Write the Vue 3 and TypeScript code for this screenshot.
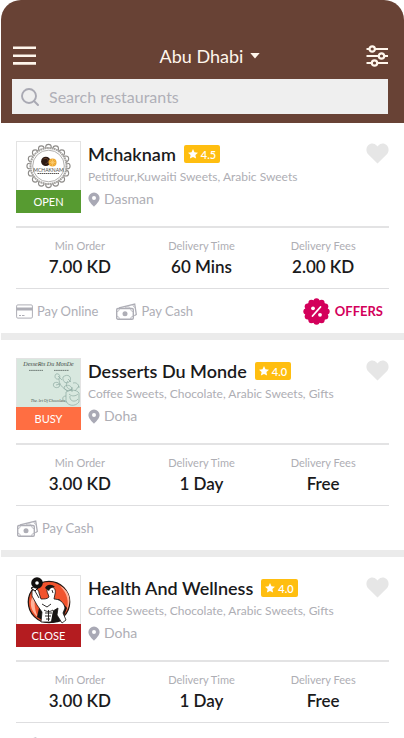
<script setup lang="ts">
import { ref } from 'vue'

type Status = 'open' | 'busy' | 'close'
type Payment = 'online' | 'cash'

interface Restaurant {
  id: number
  name: string
  rating: string
  cuisines: string
  area: string
  status: Status
  minOrder: string
  time: string
  fee: string
  payments: Payment[]
  offers: boolean
  favourite: boolean
}

const query = ref('')

const restaurants = ref<Restaurant[]>([
  {
    id: 1, name: 'Mchaknam', rating: '4.5', cuisines: 'Petitfour,Kuwaiti Sweets, Arabic Sweets',
    area: 'Dasman', status: 'open', minOrder: '7.00 KD', time: '60 Mins', fee: '2.00 KD',
    payments: ['online', 'cash'], offers: true, favourite: false,
  },
  {
    id: 2, name: 'Desserts Du Monde', rating: '4.0', cuisines: 'Coffee Sweets, Chocolate, Arabic Sweets, Gifts',
    area: 'Doha', status: 'busy', minOrder: '3.00 KD', time: '1 Day', fee: 'Free',
    payments: ['cash'], offers: false, favourite: false,
  },
  {
    id: 3, name: 'Health And Wellness', rating: '4.0', cuisines: 'Coffee Sweets, Chocolate, Arabic Sweets, Gifts',
    area: 'Doha', status: 'close', minOrder: '3.00 KD', time: '1 Day', fee: 'Free',
    payments: ['cash'], offers: false, favourite: false,
  },
])

const payLabel: Record<Payment, string> = { online: 'Pay Online', cash: 'Pay Cash' }

// Evenly spaced points on a circle, used for scalloped edges.
function ring(count: number, radius: number, cx: number, cy: number) {
  return Array.from({ length: count }, (_, i) => {
    const a = (i / count) * Math.PI * 2
    return { x: cx + Math.sin(a) * radius, y: cy - Math.cos(a) * radius }
  })
}

const sealBumps = ring(12, 10.2, 13.5, 13.5)
const lace = ring(16, 18.8, 31.5, 24)
</script>

<template>
  <div class="app">
    <header class="header">
      <div class="bar">
        <button class="icon-btn" type="button" aria-label="Menu">
          <svg width="24" height="20" viewBox="0 0 24 20">
            <path d="M1 1.7h23M1 9.7h23M1 17.4h23" stroke="currentColor" stroke-width="2.6" />
          </svg>
        </button>
        <button class="city" type="button">
          Abu Dhabi
          <svg width="10" height="6" viewBox="0 0 10 6"><path d="M.3 0h9.4L5 5.6z" fill="currentColor" /></svg>
        </button>
        <button class="icon-btn filter" type="button" aria-label="Filters">
          <svg width="22" height="22" viewBox="0 0 22 22" fill="none" stroke="currentColor" stroke-width="2.2">
            <path d="M.5 4h3M9 4h13M.5 11h12M18.5 11H22M.5 18h5M11.5 18H22" />
            <circle cx="6.2" cy="4" r="2.7" /><circle cx="15.5" cy="11" r="2.7" /><circle cx="8.5" cy="18" r="2.7" />
          </svg>
        </button>
      </div>
      <label class="search">
        <svg width="18" height="18" viewBox="0 0 18 18" fill="none" stroke="currentColor" stroke-width="1.9">
          <circle cx="8" cy="8" r="7" /><path d="M13 13l4 4" stroke-linecap="round" />
        </svg>
        <input v-model="query" type="text" placeholder="Search restaurants" aria-label="Search restaurants">
      </label>
    </header>

    <main class="list">
      <article v-for="r in restaurants" :key="r.id" class="card">
        <div class="top">
          <div class="thumb" :class="r.status">
            <svg v-if="r.id === 1" class="art" viewBox="0 0 63 48">
              <g fill="none" stroke="#8d8b88">
                <circle v-for="(p, i) in lace" :key="i" :cx="p.x" :cy="p.y" r="2.8" stroke-width="1.1" />
              </g>
              <circle cx="31.5" cy="24" r="18" fill="#fff" stroke="#a5a3a0" stroke-width="2" stroke-dasharray="1.8 .5" />
              <circle cx="31.5" cy="24" r="15.8" fill="none" stroke="#8d8b88" stroke-width=".7" />
              <circle cx="28.8" cy="19.4" r="4.7" fill="#2c1a14" />
              <path d="M26.5 17c2-1 4-1 4.6 1.2s-1 3-2.6 3.5" fill="none" stroke="#65402b" />
              <circle cx="35.5" cy="20.5" r="4" fill="#eda832" />
              <path d="M35.5 17v7M32.5 20.5h6M33.5 18.5l4 4M37.5 18.5l-4 4" stroke="#ffd47e" stroke-width=".6" />
              <text class="wordmark" x="31.5" y="29.5" text-anchor="middle">MCHAKNAM</text>
              <path d="M20.5 31.5h22" stroke="#595653" stroke-width="1.2" stroke-dasharray="1.5 .5" />
            </svg>
            <svg v-else-if="r.id === 2" class="art mint" viewBox="0 0 63 48">
              <text class="script" x="31.5" y="7" text-anchor="middle" font-size="6">DesseRts Du MonDe</text>
              <path d="M12 11.4h14M37 11.4h15" stroke="#66726d" stroke-width=".9" stroke-dasharray="1.7 .4" />
              <text class="script" x="31" y="43" text-anchor="middle" font-size="4">The Art Of Chocolate</text>
              <g fill="none" stroke="#8da9a0" stroke-width=".7">
                <path d="M39 15c3-1 5 2 3 5-4 1-5-3-3-5zM46 18c5-4 9 0 7 4-3 4-8 1-7-4zM42 20c0 5 3 9 9 12M37 24c4-2 7 1 5 4-4 2-7-1-5-4zM51 22c-3 3-2 8 4 9M47 28c3-3 7-2 8 2-3 3-7 2-8-2z" />
                <path d="M49 33c5-3 11-2 13 1v9c-4 5-11 4-13-1zM52 35c3 3 7 2 9 0M53 37c-1 5 5 7 8 3M56 24c4-1 6 2 6 5M49 37c-5 0-4 6 1 6M55 33v-5m3 4 4-5M41 17l4 4m6-1 3 3M39 26l4-1" />
              </g>
            </svg>
            <svg v-else class="art" viewBox="0 0 63 48">
              <circle cx="32" cy="26" r="20.7" fill="#f1532d" stroke="#241814" stroke-width="1.3" />
              <path d="M21 14c-10 8-9 20 0 27-4-8-5-18 0-27zM43 10c7 7 10 16 6 25 7-10 3-21-6-25z" fill="#ffb39b" />
              <path d="M20 41l4-18h18l8 9-5 13q-12 5-25-4z" fill="#171413" />
              <path d="M15 15c4-4 7-1 7 2l2 6c4 0 6 0 8-2l-1-3c-2-4-1-7 3-7 4 0 5 4 4 7l-1 5c5 0 10 3 11 9l-2 5 3 7-4 3-5-8 1-7-5 3-2 11H24l1-10-5-7-5-9z" fill="#fff" stroke="#171413" stroke-width=".8" />
              <path d="M27 34c3-2 6-2 9 0l-2 11h-6z" fill="#fff" />
              <path d="M27 34c3 2 6 2 9 0M28 37h7m-7 3h6m-5 3h4M31.5 34v11M25 28l5 3 4-3M35 14l1 3M18 15l4 7" fill="none" stroke="#171413" stroke-width=".9" />
              <path d="M28 12c2-4 7-4 10-1-3 0-5 1-6 4z" fill="#171413" />
              <path d="M14 12q4-3 7 0l-3 3z" fill="#fff" stroke="#171413" />
              <circle cx="20" cy="7" r="5.8" fill="#110f0e" /><circle cx="20" cy="7" r="1.8" fill="#fff" />
            </svg>
            <span class="status">{{ r.status.toUpperCase() }}</span>
          </div>
          <div class="info">
            <div class="heading">
              <h2>{{ r.name }}</h2>
              <span class="rating">
                <svg width="10" height="10" viewBox="0 0 10 10"><path d="M5 0l1.5 3.3 3.5.4-2.6 2.4.7 3.5L5 7.9 1.9 9.6l.7-3.5L0 3.7l3.5-.4z" fill="currentColor" /></svg>
                {{ r.rating }}
              </span>
            </div>
            <p class="cuisines">{{ r.cuisines }}</p>
            <p class="area">
              <svg width="12" height="15" viewBox="0 0 12 15"><path fill-rule="evenodd" d="M6 .5a5.6 5.6 0 0 1 5.6 5.6C11.6 9.5 8 12.7 6 14.7 4 12.7.4 9.5.4 6.1A5.6 5.6 0 0 1 6 .5zm0 3.5a2 2 0 1 0 0 4 2 2 0 0 0 0-4z" fill="currentColor" /></svg>
              {{ r.area }}
            </p>
          </div>
          <button class="heart" type="button" :class="{ on: r.favourite }" :aria-pressed="r.favourite" aria-label="Favourite" @click="r.favourite = !r.favourite">
            <svg width="23" height="21" viewBox="0 0 23 21"><path d="M11.5 20.5L2.1 11.2C-.2 8.700-.1 4.600 2.200 2.200c2.500-2.500 6.300-2.300 8.400.3l.9 1.100.9-1.100C14.500-.1 18.300-.3 20.800 2.200c2.300 2.400 2.400 6.500.1 9z" fill="currentColor" /></svg>
          </button>
        </div>

        <dl class="stats">
          <div><dt>Min Order</dt><dd>{{ r.minOrder }}</dd></div>
          <div><dt>Delivery Time</dt><dd>{{ r.time }}</dd></div>
          <div><dt>Delivery Fees</dt><dd>{{ r.fee }}</dd></div>
        </dl>

        <div class="bottom">
          <span v-for="p in r.payments" :key="p" class="pay">
            <svg v-if="p === 'online'" width="17" height="15" viewBox="0 0 17 15">
              <rect x=".6" y=".9" width="15.8" height="13.2" rx="1.2" fill="none" stroke="currentColor" />
              <path d="M.5 5h16" stroke="currentColor" stroke-width="3" />
              <path d="M3 11.5h2M6 11.5h2.5" stroke="currentColor" />
            </svg>
            <svg v-else class="cash" width="21" height="17" viewBox="0 0 21 17" fill="none" stroke="currentColor">
              <rect x=".7" y="5.5" width="16.6" height="10.7" rx="1.2" stroke-width="1.4" />
              <circle cx="9" cy="10.8" r="2.5" fill="currentColor" stroke="none" />
              <path d="M1 8.5c1.5 0 2.3-1 2.3-2.700M17 8.500c-1.500 0-2.300-1-2.300-2.700M1 13.300c1.500 0 2.300 1 2.300 2.700M17 13.300c-1.500 0-2.300 1-2.300 2.700" stroke-width=".8" />
              <path d="M3 4.800L18.700 1l1.600 10.500-2 1.300" stroke-width="1.300" />
              <path d="M9 5c2-1.400 4-1.400 5.500 0M17 1.500c0 2 1 3 2.300 2.800" stroke-width=".8" />
            </svg>
            {{ payLabel[p] }}
          </span>
          <a v-if="r.offers" class="offers" href="#offers">
            <svg width="27" height="27" viewBox="0 0 27 27">
              <g fill="currentColor">
                <circle cx="13.5" cy="13.5" r="11.5" />
                <circle v-for="(p, i) in sealBumps" :key="i" :cx="p.x" :cy="p.y" r="3" />
              </g>
              <path d="M17.5 9l-8 9" stroke="#fff" stroke-width="1.8" stroke-linecap="round" />
              <circle cx="10" cy="10.3" r="1.9" fill="#fff" /><circle cx="17" cy="16.8" r="1.9" fill="#fff" />
            </svg>
            OFFERS
          </a>
        </div>
      </article>
    </main>
  </div>
</template>

<style>
html { scrollbar-width: none; }
body { background: #fff; }
</style>

<style scoped>
* { box-sizing: border-box; }
.app { padding-left: 1px; font-family: Lato, "Liberation Sans", sans-serif; color: #1a1a1c; }
button { border: 0; padding: 0; background: none; font: inherit; color: inherit; cursor: pointer; }
svg { display: block; flex: none; }
h2, p, dl, dd { margin: 0; }

.header { padding: 42px 16px 9px 11px; background: #684235; color: #fff6ec; border-radius: 20px 20px 0 0; }
.bar { display: grid; grid-template-columns: 1fr auto 1fr; align-items: center; height: 28px; }
.icon-btn { justify-self: start; }
.filter { justify-self: end; }
.city { display: flex; align-items: center; gap: 7px; padding-left: 20px; font-size: 18px; line-height: 28px; }
.search { display: flex; align-items: center; gap: 10px; height: 35px; margin-top: 9px; padding: 0 9px; background: #efefef; color: #a9a9b3; }
.search input { flex: 1; min-width: 0; border: 0; padding: 0; outline: 0; background: none; font: inherit; font-size: 16px; color: #55555c; }
.search input::placeholder { color: #b0b0b8; opacity: 1; }

.card { padding: 18px 15px 0; }
.card + .card { border-top: 7px solid #ebebeb; }
.top { display: flex; gap: 7px; padding-bottom: 13px; border-bottom: 2px solid #e3e3e4; }
.thumb { display: flex; flex-direction: column; flex: none; width: 65px; height: 72px; border: 1px solid #e3e3e3; }
.art { width: 100%; height: 48px; }
.mint { background: #d8e8df; }
.wordmark { font-size: 5px; fill: #4d4a48; }
.script { font-family: "Liberation Serif", serif; font-style: italic; fill: #3f4a46; }
.status { margin: 0 -1px -1px; height: 23px; line-height: 23px; text-align: center; color: #fff; font-size: 11px; }
.open .status { background: #579b31; }
.busy .status { background: #ff6e42; }
.close .status { background: #b41c20; }

.info { flex: 1; min-width: 0; }
.heading { display: flex; align-items: center; gap: 8px; height: 26px; }
h2 { font-size: 18px; line-height: 26px; font-weight: 600; }
.rating { display: flex; align-items: center; gap: 3px; height: 18px; padding: 0 4px; border-radius: 2px; background: #ffbe10; color: #fff; font-size: 11px; font-weight: 600; }
.cuisines { font-size: 12px; line-height: 20px; color: #aeaeb4; white-space: nowrap; }
.area { display: flex; align-items: center; gap: 4px; font-size: 14px; line-height: 24px; color: #aeaeb4; }
.area svg { color: #a9a9b5; }
.heart { align-self: flex-start; margin-top: 2px; color: #e6e6e6; }
.heart.on { color: #d3005b; }

.stats { display: grid; grid-template-columns: repeat(3, 1fr); padding: 9px 5px 9px 3px; border-bottom: 1px solid #dedee0; text-align: center; }
dt { font-size: 11px; line-height: 18px; color: #aeaeb4; }
dd { font-size: 17px; line-height: 24px; font-weight: 600; }

.bottom { display: flex; align-items: center; gap: 17px; height: 44px; padding-right: 6px; }
.pay { display: flex; align-items: center; gap: 4px; font-size: 13px; line-height: 20px; color: #aeaeb6; }
.cash { margin-left: 1px; }
.offers { display: flex; align-items: center; gap: 5px; margin-left: auto; font-size: 13px; font-weight: 700; color: #d3005b; text-decoration: none; }
</style>
